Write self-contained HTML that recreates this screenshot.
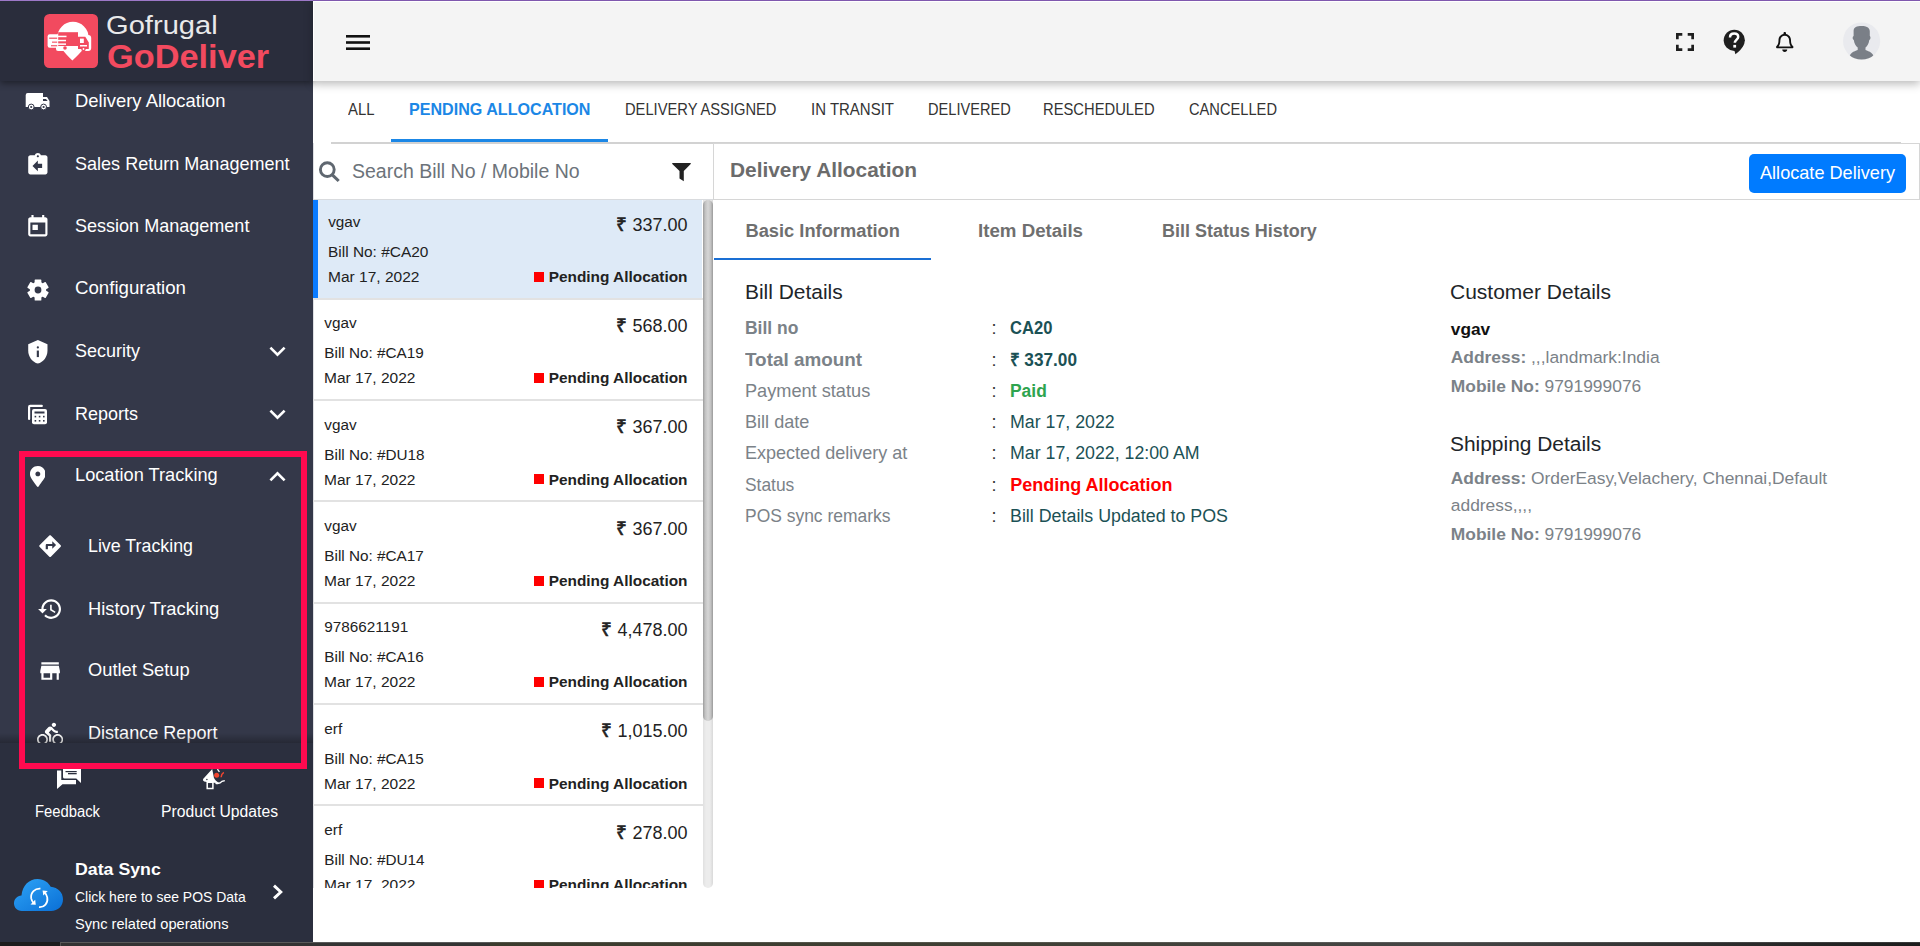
<!DOCTYPE html>
<html><head><meta charset="utf-8">
<style>
*{box-sizing:border-box;margin:0;padding:0}
html,body{width:1920px;height:946px;overflow:hidden;background:#fff;font-family:"Liberation Sans",sans-serif}
.a{position:absolute}
.t{position:absolute;white-space:nowrap;line-height:1;z-index:20}
svg{position:absolute;z-index:21}
</style></head><body>
<!-- sidebar -->
<div class="a" style="left:0;top:0;width:313px;height:942px;background:#343849"></div>
<div class="a" style="left:0;top:0;width:313px;height:81px;background:#2a2d3c;box-shadow:0 2px 7px rgba(0,0,0,.45);z-index:3"></div>
<div class="a" style="left:0;top:743px;width:313px;height:199px;background:#2b2f3e;z-index:22"></div>
<div class="a" style="left:0;top:733px;width:313px;height:10px;background:linear-gradient(rgba(0,0,0,0),rgba(0,0,0,.28));z-index:22"></div>
<div class="a" style="left:19px;top:451px;width:288px;height:318px;border:6px solid #ff0a4f;z-index:30"></div>
<!-- topbar -->
<div class="a" style="left:313px;top:0;width:1607px;height:81px;background:#f4f4f4;box-shadow:0 3px 9px rgba(0,0,0,.28);z-index:4"></div>
<div class="a" style="left:313px;top:0;width:1px;height:81px;background:#fff;z-index:5"></div>
<div class="a" style="left:0;top:0;width:1920px;height:1px;background:#7f58ae;z-index:60"></div>
<div class="a" style="left:0;top:0;width:313px;height:1px;background:#9d78c8;z-index:61"></div>
<div class="a" style="left:313px;top:1px;width:1607px;height:1px;background:#fff;z-index:60"></div>
<!-- tabs -->
<div class="a" style="left:331px;top:142px;width:1570px;height:2px;background:#d2d2d2"></div>
<div class="a" style="left:391px;top:139px;width:217px;height:3px;background:#1b87e6;z-index:2"></div>
<!-- left panel -->
<div class="a" style="left:313px;top:143px;width:1px;height:745px;background:#dedfe3"></div>
<div class="a" style="left:713px;top:143px;width:1px;height:57px;background:#d6d6d6"></div>
<!-- list items -->
<div class="a" style="left:313px;top:199px;width:400px;height:1px;background:#d9dbde"></div>
<div class="a" style="left:314px;top:200px;width:388px;height:98px;background:#deeaf7"></div>
<div class="a" style="left:313px;top:200px;width:5px;height:98px;background:#0a7bff;z-index:2"></div>
<div class="a" style="left:313px;top:298px;width:390px;height:2px;background:#e2e2e2"></div>
<div class="a" style="left:313px;top:399px;width:390px;height:2px;background:#e2e2e2"></div>
<div class="a" style="left:313px;top:500px;width:390px;height:2px;background:#e2e2e2"></div>
<div class="a" style="left:313px;top:602px;width:390px;height:2px;background:#e2e2e2"></div>
<div class="a" style="left:313px;top:703px;width:390px;height:2px;background:#e2e2e2"></div>
<div class="a" style="left:313px;top:804px;width:390px;height:2px;background:#e2e2e2"></div>
<!-- red squares -->
<div class="a" style="left:534px;top:272px;width:10px;height:10px;background:#f00"></div>
<div class="a" style="left:534px;top:373px;width:10px;height:10px;background:#f00"></div>
<div class="a" style="left:534px;top:474px;width:10px;height:10px;background:#f00"></div>
<div class="a" style="left:534px;top:576px;width:10px;height:10px;background:#f00"></div>
<div class="a" style="left:534px;top:677px;width:10px;height:10px;background:#f00"></div>
<div class="a" style="left:534px;top:778px;width:10px;height:10px;background:#f00"></div>
<div class="a" style="left:534px;top:880px;width:10px;height:10px;background:#f00"></div>
<!-- scrollbar -->
<div class="a" style="left:703px;top:200px;width:10px;height:688px;background:linear-gradient(90deg,#e0e0e0 0,#ececec 30%,#ececec 70%,#d9d9d9 100%);border-radius:0 0 5px 5px;z-index:25"></div>
<div class="a" style="left:703px;top:200px;width:10px;height:521px;background:linear-gradient(90deg,#9c9c9c 0,#c2c2c2 22%,#d6d6d6 50%,#c2c2c2 78%,#9a9a9a 100%);border-radius:5px;z-index:26"></div>
<!-- white mask for clipped list bottom -->
<div class="a" style="left:313px;top:888px;width:390px;height:54px;background:#fff;z-index:24"></div>
<!-- right header -->
<div class="a" style="left:713px;top:143px;width:1207px;height:57px;border:1px solid #d6d6d6;border-left:1px solid #d6d6d6"></div>
<div class="a" style="left:1749px;top:154px;width:157px;height:39px;background:#007bff;border-radius:5px"></div>
<div class="a" style="left:714px;top:258px;width:217px;height:2px;background:#1a6fd4"></div>
<!-- bottom taskbar strip -->
<div class="a" style="left:0;top:942px;width:1920px;height:4px;background:linear-gradient(90deg,#1c1c1c 0,#1c1c1c 490px,#3b3b2d 490px,#3f3f34 1000px,#454545 1450px,#2a2a2a 1750px,#1c1c1c 1920px);z-index:70"></div>
<div class="a" style="left:60px;top:942px;width:430px;height:4px;background:#333;border-top:1px solid #5a5a5a;border-left:1px solid #555;z-index:71"></div>
<div class="a" style="left:490px;top:942px;width:1430px;height:1px;background:rgba(255,255,255,.12);z-index:71"></div>
<!-- logo -->
<svg style="left:44px;top:14px;z-index:10" width="54" height="54" viewBox="0 0 54 54">
  <rect x="0" y="0" width="54" height="54" rx="5.5" fill="#f24a5f"/>
  <path d="M13.3 23.5 A15.6 15.6 0 0 1 44.6 23.5 C44.6 31 37 38 28.4 46.6 C20 38 13.3 31 13.3 23.5Z" fill="#fff"/>
  <rect x="3.6" y="20.3" width="19" height="13.5" rx="2.2" fill="#fff"/>
  <rect x="30" y="21" width="17.2" height="16" rx="3" fill="#fff"/>
  <rect x="12" y="30" width="30" height="7" rx="2" fill="#fff"/>
  <rect x="14.2" y="18.2" width="19.8" height="13.8" fill="#f24a5f"/>
  <g fill="#fff"><rect x="13" y="21.7" width="9.5" height="1.5"/><rect x="13" y="25.8" width="9" height="1.5"/><rect x="13" y="29.4" width="9" height="1.5"/></g>
  <g fill="#f24a5f"><rect x="5.2" y="23.6" width="8" height="1.2"/><rect x="8" y="27.6" width="5.2" height="1.1"/><rect x="7" y="31.2" width="6.2" height="1.1"/></g>
  <path d="M34 22.8 H41.3 L44.8 28.5 V35 H34Z" fill="#f24a5f"/>
  <path d="M36 24.6 H39.8 V29 H36Z" fill="#fff"/>
  <rect x="36" y="31" width="7" height="1.5" fill="#fff"/>
  <circle cx="21" cy="34" r="1.8" fill="#f24a5f"/>
  <circle cx="39.5" cy="35" r="2.3" fill="#f24a5f"/>
  <circle cx="39.5" cy="35" r="0.9" fill="#fff"/>
</svg>
<!-- truck -->
<svg style="left:25px;top:92px" width="26" height="20" viewBox="0 0 26 20">
  <path d="M0.7 3 Q0.7 1 2.7 1 H18 V5 H22 L24.5 9 V15 H0.7Z" fill="#fff"/>
  <path d="M18 7 H21 L22.6 9 H18Z" fill="#343849"/>
  <circle cx="6.2" cy="15" r="2.9" fill="#fff" stroke="#343849" stroke-width="1"/>
  <circle cx="6.2" cy="15" r="1.1" fill="#343849"/>
  <circle cx="18.6" cy="15" r="2.9" fill="#fff" stroke="#343849" stroke-width="1"/>
  <circle cx="18.6" cy="15" r="1.1" fill="#343849"/>
</svg>
<!-- sales return: assignment_return -->
<svg style="left:24.6px;top:151.7px" width="25.7" height="25.7" viewBox="0 0 24 24">
  <path fill="#fff" d="M19 3h-4.18C14.4 1.84 13.3 1 12 1c-1.3 0-2.4.84-2.82 2H5c-1.1 0-2 .9-2 2v14c0 1.1.9 2 2 2h14c1.1 0 2-.9 2-2V5c0-1.1-.9-2-2-2zm-7 0c.55 0 1 .45 1 1s-.45 1-1 1-1-.45-1-1 .45-1 1-1zm4 12h-4v3l-5-5 5-5v3h4v4z"/>
</svg>
<!-- session: today -->
<svg style="left:24.6px;top:213.7px" width="25.7" height="25.7" viewBox="0 0 24 24">
  <path fill="#fff" d="M19 3h-1V1h-2v2H8V1H6v2H5c-1.11 0-1.99.9-1.99 2L3 19c0 1.1.89 2 2 2h14c1.1 0 2-.9 2-2V5c0-1.1-.9-2-2-2zm0 16H5V8h14v11zM7 10h5v5H7z"/>
</svg>
<!-- gear -->
<svg style="left:26.95px;top:278.95px" width="22" height="22" viewBox="-11 -11 22 22">
  <g fill="#fff">
    <circle r="8.2"/>
    <rect x="-3.35" y="-10.55" width="6.7" height="21.1" rx="0.6"/>
    <rect x="-3.35" y="-10.55" width="6.7" height="21.1" rx="0.6" transform="rotate(60)"/>
    <rect x="-3.35" y="-10.55" width="6.7" height="21.1" rx="0.6" transform="rotate(120)"/>
  </g>
  <circle r="3.4" fill="#343849"/>
</svg>
<!-- shield -->
<svg style="left:24.6px;top:338.7px" width="25.7" height="25.7" viewBox="0 0 24 24">
  <path fill="#fff" d="M12 1L3 5v6c0 5.55 3.84 10.74 9 12 5.16-1.26 9-6.45 9-12V5l-9-4z"/>
  <circle cx="12" cy="7.9" r="1.05" fill="#343849"/>
  <rect x="11" y="10.8" width="2" height="6.1" fill="#343849"/>
</svg>
<!-- reports -->
<svg style="left:27px;top:404px" width="22" height="22" viewBox="0 0 22 22">
  <path d="M2.1 15 V3 Q2.1 1.9 3.2 1.9 H14.8" fill="none" stroke="#fff" stroke-width="2.2" stroke-linecap="round"/>
  <rect x="5" y="5" width="15" height="15.2" rx="2" fill="#fff"/>
  <rect x="7.5" y="7.5" width="10" height="2" fill="#343849"/>
  <g fill="#343849">
    <rect x="7.6" y="11.8" width="1.6" height="1.6"/><rect x="11.8" y="11.8" width="1.6" height="1.6"/><rect x="16" y="11.8" width="1.6" height="1.6"/>
    <rect x="7.6" y="16" width="1.6" height="1.6"/><rect x="11.8" y="16" width="1.6" height="1.6"/><rect x="16" y="16" width="1.6" height="1.6"/>
  </g>
</svg>
<!-- pin -->
<svg style="left:29.7px;top:465.9px" width="15.7" height="21" viewBox="0 0 384 512">
  <path fill="#fff" d="M172.268 501.67C26.97 291.031 0 269.413 0 192 0 85.961 85.961 0 192 0s192 85.961 192 192c0 77.413-26.97 99.031-172.268 309.67-9.535 13.774-29.93 13.773-39.464 0zM192 252c33 0 60-27 60-60s-27-60-60-60-60 27-60 60 27 60 60 60z"/>
</svg>
<!-- chevrons -->
<svg style="left:268px;top:345px" width="19" height="14" viewBox="0 0 19 14"><path d="M2.4 2.6 L9.5 9.6 L16.6 2.6" fill="none" stroke="#fff" stroke-width="2.6"/></svg>
<svg style="left:268px;top:408px" width="19" height="14" viewBox="0 0 19 14"><path d="M2.4 2.6 L9.5 9.6 L16.6 2.6" fill="none" stroke="#fff" stroke-width="2.6"/></svg>
<svg style="left:268px;top:469px" width="19" height="14" viewBox="0 0 19 14"><path d="M2.4 11.4 L9.5 4.4 L16.6 11.4" fill="none" stroke="#fff" stroke-width="2.6"/></svg>
<!-- directions -->
<svg style="left:36.8px;top:533.3px" width="26.2" height="26.2" viewBox="0 0 24 24">
  <path fill="#fff" d="M21.71 11.29l-9-9c-.39-.39-1.02-.39-1.41 0l-9 9c-.39.39-.39 1.02 0 1.41l9 9c.39.39 1.02.39 1.41 0l9-9c.39-.38.39-1.01 0-1.41zM14 14.5V12h-4v3H8v-4c0-.55.45-1 1-1h5V7.5l3.5 3.5-3.5 3.5z"/>
</svg>
<!-- history -->
<svg style="left:36.8px;top:596.4px" width="26.2" height="26.2" viewBox="0 0 24 24">
  <path fill="#fff" d="M13 3c-4.97 0-9 4.03-9 9H1l3.89 3.89.07.14L9 12H6c0-3.87 3.13-7 7-7s7 3.13 7 7-3.13 7-7 7c-1.93 0-3.68-.79-4.94-2.06l-1.42 1.42C8.27 19.99 10.51 21 13 21c4.97 0 9-4.03 9-9s-4.03-9-9-9zm-1 5v5l4.28 2.54.72-1.21-3.5-2.08V8H12z"/>
</svg>
<!-- store -->
<svg style="left:36.9px;top:658.4px" width="26.2" height="26.2" viewBox="0 0 24 24">
  <path fill="#fff" d="M20 4H4v2h16V4zm1 10v-2l-1-5H4l-1 5v2h1v6h10v-6h4v6h2v-6h1zm-9 4H6v-4h6v4z"/>
</svg>
<!-- bike -->
<svg style="left:36.8px;top:721.4px" width="26.2" height="26.2" viewBox="0 0 24 24">
  <path fill="#fff" d="M15.5 5.5c1.1 0 2-.9 2-2s-.9-2-2-2-2 .9-2 2 .9 2 2 2zM5 12c-2.8 0-5 2.2-5 5s2.2 5 5 5 5-2.2 5-5-2.2-5-5-5zm0 8.5c-1.9 0-3.5-1.6-3.5-3.5s1.6-3.5 3.5-3.5 3.5 1.6 3.5 3.5-1.6 3.5-3.5 3.5zm5.8-10l2.4-2.4.8.8c1.3 1.3 3 2.1 5.1 2.1V9c-1.5 0-2.7-.6-3.6-1.5l-1.9-1.9c-.5-.4-1-.6-1.6-.6s-1.1.2-1.4.6L7.8 8.4c-.4.4-.6.9-.6 1.4 0 .6.2 1.1.6 1.4L11 14v5h2v-6.2l-2.2-2.3zM19 12c-2.8 0-5 2.2-5 5s2.2 5 5 5 5-2.2 5-5-2.2-5-5-5zm0 8.5c-1.9 0-3.5-1.6-3.5-3.5s1.6-3.5 3.5-3.5 3.5 1.6 3.5 3.5-1.6 3.5-3.5 3.5z"/>
</svg>
<!-- feedback -->
<svg style="left:50px;top:762px;z-index:25" width="40" height="33" viewBox="0 0 40 33">
  <path fill="#fff" d="M7 8.5 H26 V22.3 H12.5 L7 27 Z"/>
  <path fill="#2b2f3e" d="M11.3 4 H32.5 V23.5 L26 18 H11.3Z"/>
  <path fill="#fff" d="M13 5 H31 V21 L26.3 16.6 H14.6 Q13 16.6 13 15 Z"/>
  <rect x="15.5" y="9" width="11.2" height="1.2" fill="#2b2f3e"/>
  <rect x="18" y="11" width="8.7" height="1.3" fill="#2b2f3e"/>
</svg>
<!-- megaphone -->
<svg style="left:200px;top:766px;z-index:25" width="26" height="26" viewBox="0 0 26 26">
  <path fill="#fff" d="M3.1 13 Q2.4 14.6 4.2 15.4 L8 16.2 L19.6 17.2 Q15.2 15.2 13.9 11.8 L13 7 L12.2 3 Z"/>
  <rect x="7.2" y="16.3" width="5.7" height="6.2" fill="none" stroke="#fff" stroke-width="1.5"/>
  <path d="M15.5 17.2 Q19.8 18.2 22 15.4 L24.8 14.6" fill="none" stroke="#fff" stroke-width="1.4"/>
  <path d="M17.4 3.2 L19.4 5.8" stroke="#fff" stroke-width="1.3"/>
  <circle cx="16.65" cy="9.2" r="2.5" fill="#f2452f"/>
  <path d="M21.1 11.2 Q21.2 8.2 23.8 6.4" fill="none" stroke="#f2452f" stroke-width="1.5"/>
  <circle cx="6.9" cy="13.4" r="0.75" fill="#2b2f3e"/>
</svg>
<!-- cloud -->
<svg style="left:12.5px;top:876.5px;z-index:40" width="51" height="35" viewBox="0 0 52 36">
  <defs><linearGradient id="cg" x1="0" y1="0" x2="1" y2="1"><stop offset="0" stop-color="#2ea4f6"/><stop offset="1" stop-color="#0a6fd6"/></linearGradient></defs>
  <path fill="url(#cg)" d="M9 35 C3.5 35 0.8 31 0.8 27 C0.8 22.5 4 19.5 8.5 19 C9.5 9 16 2 25 2 C32 2 36.5 6 38.5 10 C46 10.5 51.2 16 51.2 23 C51.2 30 46 35 39 35Z"/>
  <path d="M28 12 C22.5 11.5 17.5 16 18.5 22 C19 24.5 20 25.8 21 26.8" fill="none" stroke="#fff" stroke-width="1.8"/>
  <path d="M17.8 28.3 L23.2 28.6 L22.6 23.5Z" fill="#fff"/>
  <path d="M26.5 31 C32 31.5 36 27 35 21 C34.5 18.5 33.5 17 32.5 16" fill="none" stroke="#fff" stroke-width="1.8"/>
  <path d="M35.5 14.3 L30.2 14 L30.9 19Z" fill="#fff"/>
</svg>
<svg style="left:271px;top:883px;z-index:40" width="14" height="18" viewBox="0 0 14 18"><path d="M3 2.6 L9.8 9 L3 15.4" fill="none" stroke="#fff" stroke-width="2.9"/></svg>
<!-- topbar icons -->
<svg style="left:345px;top:33px;z-index:10" width="26" height="18" viewBox="0 0 26 18">
  <rect x="1" y="2" width="24" height="2.6" fill="#111"/><rect x="1" y="8.2" width="24" height="2.6" fill="#111"/><rect x="1" y="14.4" width="24" height="2.6" fill="#111"/>
</svg>
<svg style="left:1676px;top:33px;z-index:10" width="18" height="18" viewBox="0 0 18 18">
  <path d="M1.35 6.3 V1.35 H6.3 M11.7 1.35 H16.65 V6.3 M16.65 11.7 V16.65 H11.7 M6.3 16.65 H1.35 V11.7" fill="none" stroke="#1f1f1f" stroke-width="2.7"/>
</svg>
<svg style="left:1723px;top:29px;z-index:10" width="23" height="26" viewBox="0 0 23 26">
  <circle cx="11.3" cy="11.3" r="10.6" fill="#1f1f1f"/>
  <path d="M11 20 L20.8 15.5 Q18.5 21 12.4 25.2Z" fill="#1f1f1f"/>
  <path d="M7 8.4 C7 5.9 8.9 4.6 11.2 4.6 C13.6 4.6 15.2 6 15.2 8 C15.2 10.3 11.8 11 11.8 13.8" fill="none" stroke="#fff" stroke-width="2.5"/>
  <rect x="10.3" y="15.9" width="2.8" height="2.7" fill="#fff"/>
</svg>
<svg style="left:1776.2px;top:31.5px;z-index:10" width="17.5" height="20" viewBox="0 0 448 512">
  <path fill="#111" d="M439.39 362.29c-19.32-20.76-55.47-51.990-55.47-154.29 0-77.7-54.48-139.9-127.94-155.16V32c0-17.67-14.32-32-31.98-32s-31.98 14.33-31.980 32v20.84C118.56 68.1 64.08 130.3 64.08 208c0 102.3-36.15 133.53-55.47 154.29-6 6.45-8.66 14.16-8.61 21.71.11 16.4 12.98 32 32.1 32h383.8c19.12 0 32-15.6 32.1-32 .05-7.55-2.61-15.27-8.61-21.710zM67.53 368c21.22-27.97 44.42-74.33 44.53-159.42 0-.2-.06-.38-.06-.58 0-61.86 50.14-112 112-112s112 50.14 112 112c0 .2-.06.38-.06.58.11 85.1 23.31 131.46 44.53 159.42H67.53zM224 512c35.32 0 63.97-28.65 63.97-64H160.03c0 35.35 28.65 64 63.97 64z"/>
</svg>
<svg style="left:1843px;top:22px;z-index:10" width="38" height="38" viewBox="0 0 38 38">
  <defs><clipPath id="av"><circle cx="18.6" cy="19" r="18.6"/></clipPath></defs>
  <circle cx="18.6" cy="19" r="18.6" fill="#e9eaee"/>
  <g clip-path="url(#av)" fill="#7a7f87">
    <path d="M10.6 9 C10.6 5 14 4 18.5 4 C23.5 4 26.8 5.5 26.8 9.5 V14 C27.8 14.5 27.8 17.5 26.3 18 C25.8 21.5 24.5 24 22.5 25.5 V28 C26 29.5 31 30.5 31.8 38 H5.5 C6.2 30.5 11 29.5 14.7 28 V25.5 C12.7 24 11.3 21.5 10.8 18 C9.3 17.5 9.3 14.5 10.6 14Z"/>
  </g>
</svg>
<!-- search / filter -->
<svg style="left:317px;top:159px;z-index:10" width="25" height="25" viewBox="0 0 25 25">
  <circle cx="10.3" cy="10.6" r="6.9" fill="none" stroke="#5f6770" stroke-width="2.9"/>
  <path d="M15.3 15.8 L21.7 22" stroke="#5f6770" stroke-width="3.1" stroke-linecap="butt"/>
</svg>
<svg style="left:670px;top:162px;z-index:10" width="22" height="21" viewBox="0 0 22 21">
  <path d="M2.6 1.1 H20.4 Q21.2 1.2 20.7 1.9 L13.8 9 V19.2 L9.5 16.6 V9 L2.3 1.9 Q1.8 1.2 2.6 1.1Z" fill="#222"/>
</svg>

<div class='t' style='left:106.30px;top:11.99px;font-size:26px;color:#e9e9ea;transform:scaleX(1.1200);transform-origin:0 0;'>Gofrugal</div>
<div class='t' style='left:106.50px;top:40.37px;font-size:33px;color:#f24a5f;font-weight:700;transform:scaleX(1.0404);transform-origin:0 0;'>GoDeliver</div>
<div class='t' style='left:75.40px;top:91.17px;font-size:19px;color:#ffffff;transform:scaleX(0.9694);transform-origin:0 0;'>Delivery Allocation</div>
<div class='t' style='left:75.40px;top:153.72px;font-size:19px;color:#ffffff;transform:scaleX(0.9495);transform-origin:0 0;'>Sales Return Management</div>
<div class='t' style='left:75.40px;top:215.62px;font-size:19px;color:#ffffff;transform:scaleX(0.9490);transform-origin:0 0;'>Session Management</div>
<div class='t' style='left:75.40px;top:278.42px;font-size:19px;color:#ffffff;transform:scaleX(0.9820);transform-origin:0 0;'>Configuration</div>
<div class='t' style='left:75.40px;top:340.92px;font-size:19px;color:#ffffff;transform:scaleX(0.9470);transform-origin:0 0;'>Security</div>
<div class='t' style='left:75.40px;top:403.62px;font-size:19px;color:#ffffff;transform:scaleX(0.9469);transform-origin:0 0;'>Reports</div>
<div class='t' style='left:75.40px;top:465.42px;font-size:19px;color:#ffffff;transform:scaleX(0.9582);transform-origin:0 0;'>Location Tracking</div>
<div class='t' style='left:88.00px;top:535.92px;font-size:19px;color:#ffffff;transform:scaleX(0.9379);transform-origin:0 0;'>Live Tracking</div>
<div class='t' style='left:88.00px;top:598.92px;font-size:19px;color:#ffffff;transform:scaleX(0.9640);transform-origin:0 0;'>History Tracking</div>
<div class='t' style='left:88.00px;top:660.42px;font-size:19px;color:#ffffff;transform:scaleX(0.9628);transform-origin:0 0;'>Outlet Setup</div>
<div class='t' style='left:88.00px;top:723.12px;font-size:19px;color:#ffffff;transform:scaleX(0.9506);transform-origin:0 0;'>Distance Report</div>
<div class='t' style='left:35.40px;top:804.46px;font-size:16px;color:#ffffff;transform:scaleX(0.9251);transform-origin:0 0;z-index:40'>Feedback</div>
<div class='t' style='left:160.60px;top:804.46px;font-size:16px;color:#ffffff;transform:scaleX(0.9816);transform-origin:0 0;z-index:40'>Product Updates</div>
<div class='t' style='left:74.90px;top:861.16px;font-size:17.3px;color:#ffffff;font-weight:700;transform:scaleX(1.0266);transform-origin:0 0;z-index:40'>Data Sync</div>
<div class='t' style='left:74.90px;top:889.30px;font-size:15px;color:#ffffff;transform:scaleX(0.9306);transform-origin:0 0;z-index:40'>Click here to see POS Data</div>
<div class='t' style='left:74.90px;top:916.40px;font-size:15px;color:#ffffff;transform:scaleX(0.9739);transform-origin:0 0;z-index:40'>Sync related operations</div>
<div class='t' style='left:347.50px;top:100.72px;font-size:16.4px;color:#333;transform:scaleX(0.9084);transform-origin:0 0;'>ALL</div>
<div class='t' style='left:624.70px;top:100.72px;font-size:16.4px;color:#333;transform:scaleX(0.8973);transform-origin:0 0;'>DELIVERY ASSIGNED</div>
<div class='t' style='left:811.00px;top:100.72px;font-size:16.4px;color:#333;transform:scaleX(0.9144);transform-origin:0 0;'>IN TRANSIT</div>
<div class='t' style='left:927.50px;top:100.72px;font-size:16.4px;color:#333;transform:scaleX(0.8911);transform-origin:0 0;'>DELIVERED</div>
<div class='t' style='left:1043.40px;top:100.72px;font-size:16.4px;color:#333;transform:scaleX(0.9009);transform-origin:0 0;'>RESCHEDULED</div>
<div class='t' style='left:1188.80px;top:100.72px;font-size:16.4px;color:#333;transform:scaleX(0.8944);transform-origin:0 0;'>CANCELLED</div>
<div class='t' style='left:408.60px;top:100.72px;font-size:16.4px;color:#1b87e6;font-weight:700;transform:scaleX(0.9819);transform-origin:0 0;'>PENDING ALLOCATION</div>
<div class='t' style='left:352.00px;top:162.39px;font-size:19.5px;color:#6c737a;'>Search Bill No / Mobile No</div>
<div class='t' style='left:328.20px;top:214.05px;font-size:15.3px;color:#222;'>vgav</div>
<div class='t' style='left:328.20px;top:244.05px;font-size:15.3px;color:#222;transform:scaleX(1.0092);transform-origin:0 0;'>Bill No: #CA20</div>
<div class='t' style='left:328.20px;top:269.05px;font-size:15.3px;color:#222;transform:scaleX(1.0151);transform-origin:0 0;'>Mar 17, 2022</div>
<div class='t' style='right:1232.50px;top:214.76px;font-size:18px;color:#222;'><span style="-webkit-text-stroke:0.6px #222;font-size:19px">₹</span> 337.00</div>
<div class='t' style='right:1232.50px;top:268.96px;font-size:15.4px;color:#222;font-weight:700;'>Pending Allocation</div>
<div class='t' style='left:324.30px;top:315.38px;font-size:15.3px;color:#222;'>vgav</div>
<div class='t' style='left:324.30px;top:345.38px;font-size:15.3px;color:#222;'>Bill No: #CA19</div>
<div class='t' style='left:324.30px;top:370.38px;font-size:15.3px;color:#222;transform:scaleX(1.0151);transform-origin:0 0;'>Mar 17, 2022</div>
<div class='t' style='right:1232.50px;top:316.09px;font-size:18px;color:#222;'><span style="-webkit-text-stroke:0.6px #222;font-size:19px">₹</span> 568.00</div>
<div class='t' style='right:1232.50px;top:370.29px;font-size:15.4px;color:#222;font-weight:700;'>Pending Allocation</div>
<div class='t' style='left:324.30px;top:416.71px;font-size:15.3px;color:#222;'>vgav</div>
<div class='t' style='left:324.30px;top:446.71px;font-size:15.3px;color:#222;'>Bill No: #DU18</div>
<div class='t' style='left:324.30px;top:471.71px;font-size:15.3px;color:#222;transform:scaleX(1.0151);transform-origin:0 0;'>Mar 17, 2022</div>
<div class='t' style='right:1232.50px;top:417.42px;font-size:18px;color:#222;'><span style="-webkit-text-stroke:0.6px #222;font-size:19px">₹</span> 367.00</div>
<div class='t' style='right:1232.50px;top:471.62px;font-size:15.4px;color:#222;font-weight:700;'>Pending Allocation</div>
<div class='t' style='left:324.30px;top:518.04px;font-size:15.3px;color:#222;'>vgav</div>
<div class='t' style='left:324.30px;top:548.04px;font-size:15.3px;color:#222;'>Bill No: #CA17</div>
<div class='t' style='left:324.30px;top:573.04px;font-size:15.3px;color:#222;transform:scaleX(1.0151);transform-origin:0 0;'>Mar 17, 2022</div>
<div class='t' style='right:1232.50px;top:518.75px;font-size:18px;color:#222;'><span style="-webkit-text-stroke:0.6px #222;font-size:19px">₹</span> 367.00</div>
<div class='t' style='right:1232.50px;top:572.95px;font-size:15.4px;color:#222;font-weight:700;'>Pending Allocation</div>
<div class='t' style='left:324.30px;top:619.37px;font-size:15.3px;color:#222;'>9786621191</div>
<div class='t' style='left:324.30px;top:649.37px;font-size:15.3px;color:#222;'>Bill No: #CA16</div>
<div class='t' style='left:324.30px;top:674.37px;font-size:15.3px;color:#222;transform:scaleX(1.0151);transform-origin:0 0;'>Mar 17, 2022</div>
<div class='t' style='right:1232.50px;top:620.08px;font-size:18px;color:#222;'><span style="-webkit-text-stroke:0.6px #222;font-size:19px">₹</span> 4,478.00</div>
<div class='t' style='right:1232.50px;top:674.28px;font-size:15.4px;color:#222;font-weight:700;'>Pending Allocation</div>
<div class='t' style='left:324.30px;top:720.70px;font-size:15.3px;color:#222;'>erf</div>
<div class='t' style='left:324.30px;top:750.70px;font-size:15.3px;color:#222;'>Bill No: #CA15</div>
<div class='t' style='left:324.30px;top:775.70px;font-size:15.3px;color:#222;transform:scaleX(1.0151);transform-origin:0 0;'>Mar 17, 2022</div>
<div class='t' style='right:1232.50px;top:721.41px;font-size:18px;color:#222;'><span style="-webkit-text-stroke:0.6px #222;font-size:19px">₹</span> 1,015.00</div>
<div class='t' style='right:1232.50px;top:775.61px;font-size:15.4px;color:#222;font-weight:700;'>Pending Allocation</div>
<div class='t' style='left:324.30px;top:822.03px;font-size:15.3px;color:#222;'>erf</div>
<div class='t' style='left:324.30px;top:852.03px;font-size:15.3px;color:#222;'>Bill No: #DU14</div>
<div class='t' style='left:324.30px;top:877.03px;font-size:15.3px;color:#222;transform:scaleX(1.0151);transform-origin:0 0;'>Mar 17, 2022</div>
<div class='t' style='right:1232.50px;top:822.74px;font-size:18px;color:#222;'><span style="-webkit-text-stroke:0.6px #222;font-size:19px">₹</span> 278.00</div>
<div class='t' style='right:1232.50px;top:876.94px;font-size:15.4px;color:#222;font-weight:700;'>Pending Allocation</div>
<div class='t' style='left:730.40px;top:159.95px;font-size:20.5px;color:#6b6b6b;font-weight:700;transform:scaleX(1.0173);transform-origin:0 0;'>Delivery Allocation</div>
<div class='t' style='left:1760.20px;top:164.44px;font-size:18.5px;color:#fff;transform:scaleX(0.9798);transform-origin:0 0;'>Allocate Delivery</div>
<div class='t' style='left:745.50px;top:222.31px;font-size:18.3px;color:#6f6f6f;font-weight:700;'>Basic Information</div>
<div class='t' style='left:977.80px;top:222.21px;font-size:18.3px;color:#6f6f6f;font-weight:700;transform:scaleX(1.0231);transform-origin:0 0;'>Item Details</div>
<div class='t' style='left:1161.60px;top:222.21px;font-size:18.3px;color:#6f6f6f;font-weight:700;transform:scaleX(0.9831);transform-origin:0 0;'>Bill Status History</div>
<div class='t' style='left:744.90px;top:283.22px;font-size:19.7px;color:#212529;transform:scaleX(1.0630);transform-origin:0 0;'>Bill Details</div>
<div class='t' style='left:744.90px;top:319.19px;font-size:18.2px;color:#7b8288;font-weight:700;transform:scaleX(0.9608);transform-origin:0 0;'>Bill no</div>
<div class='t' style='left:991.60px;top:319.36px;font-size:18px;color:#333;'>:</div>
<div class='t' style='left:1010.20px;top:319.36px;font-size:18px;color:#1b5155;font-weight:700;transform:scaleX(0.9211);transform-origin:0 0;'>CA20</div>
<div class='t' style='left:744.90px;top:350.79px;font-size:18.2px;color:#7b8288;font-weight:700;transform:scaleX(1.0370);transform-origin:0 0;'>Total amount</div>
<div class='t' style='left:991.60px;top:350.96px;font-size:18px;color:#333;'>:</div>
<div class='t' style='left:1010.20px;top:350.96px;font-size:18px;color:#1b5155;font-weight:700;transform:scaleX(0.9563);transform-origin:0 0;'>₹ 337.00</div>
<div class='t' style='left:744.90px;top:381.99px;font-size:18.2px;color:#7b8288;'>Payment status</div>
<div class='t' style='left:991.60px;top:382.16px;font-size:18px;color:#333;'>:</div>
<div class='t' style='left:1010.20px;top:382.16px;font-size:18px;color:#2ea44f;font-weight:700;transform:scaleX(0.9680);transform-origin:0 0;'>Paid</div>
<div class='t' style='left:744.90px;top:412.89px;font-size:18.2px;color:#7b8288;transform:scaleX(0.9951);transform-origin:0 0;'>Bill date</div>
<div class='t' style='left:991.60px;top:413.06px;font-size:18px;color:#333;'>:</div>
<div class='t' style='left:1010.20px;top:413.06px;font-size:18px;color:#1b5155;transform:scaleX(0.9870);transform-origin:0 0;'>Mar 17, 2022</div>
<div class='t' style='left:744.90px;top:443.89px;font-size:18.2px;color:#7b8288;transform:scaleX(0.9910);transform-origin:0 0;'>Expected delivery at</div>
<div class='t' style='left:991.60px;top:444.06px;font-size:18px;color:#333;'>:</div>
<div class='t' style='left:1010.20px;top:444.06px;font-size:18px;color:#1b5155;transform:scaleX(0.9869);transform-origin:0 0;'>Mar 17, 2022, 12:00 AM</div>
<div class='t' style='left:744.90px;top:475.69px;font-size:18.2px;color:#7b8288;transform:scaleX(0.9561);transform-origin:0 0;'>Status</div>
<div class='t' style='left:991.60px;top:475.86px;font-size:18px;color:#333;'>:</div>
<div class='t' style='left:1010.20px;top:475.86px;font-size:18px;color:#f00;font-weight:700;'>Pending Allocation</div>
<div class='t' style='left:744.90px;top:506.69px;font-size:18.2px;color:#7b8288;transform:scaleX(0.9591);transform-origin:0 0;'>POS sync remarks</div>
<div class='t' style='left:991.60px;top:506.86px;font-size:18px;color:#333;'>:</div>
<div class='t' style='left:1010.20px;top:506.86px;font-size:18px;color:#1b5155;transform:scaleX(0.9904);transform-origin:0 0;'>Bill Details Updated to POS</div>
<div class='t' style='left:1450.20px;top:283.49px;font-size:19.5px;color:#212529;transform:scaleX(1.0766);transform-origin:0 0;'>Customer Details</div>
<div class='t' style='left:1450.80px;top:320.86px;font-size:17.3px;color:#111;'><b>vgav</b></div>
<div class='t' style='left:1450.80px;top:348.87px;font-size:17.4px;color:#7b8288;'><b>Address:</b> ,,,landmark:India</div>
<div class='t' style='left:1450.80px;top:377.67px;font-size:17.4px;color:#7b8288;'><b>Mobile No:</b> 9791999076</div>
<div class='t' style='left:1449.60px;top:434.59px;font-size:19.5px;color:#212529;transform:scaleX(1.0729);transform-origin:0 0;'>Shipping Details</div>
<div class='t' style='left:1450.80px;top:470.37px;font-size:17.4px;color:#7b8288;'><b>Address:</b> OrderEasy,Velachery, Chennai,Default</div>
<div class='t' style='left:1450.80px;top:496.77px;font-size:17.4px;color:#7b8288;'>address,,,,</div>
<div class='t' style='left:1450.80px;top:525.97px;font-size:17.4px;color:#7b8288;'><b>Mobile No:</b> 9791999076</div>
</body></html>
